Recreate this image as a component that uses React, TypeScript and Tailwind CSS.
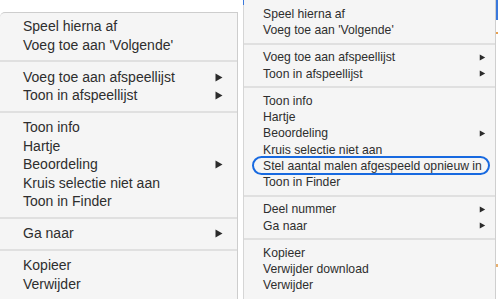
import React from "react";

type Entry = { label?: string; sub?: boolean; sep?: boolean; mark?: boolean };

const leftItems: Entry[] = [
  { label: "Speel hierna af" },
  { label: "Voeg toe aan 'Volgende'" },
  { sep: true },
  { label: "Voeg toe aan afspeellijst", sub: true },
  { label: "Toon in afspeellijst", sub: true },
  { sep: true },
  { label: "Toon info" },
  { label: "Hartje" },
  { label: "Beoordeling", sub: true },
  { label: "Kruis selectie niet aan" },
  { label: "Toon in Finder" },
  { sep: true },
  { label: "Ga naar", sub: true },
  { sep: true },
  { label: "Kopieer" },
  { label: "Verwijder" },
];

const rightItems: Entry[] = [
  { label: "Speel hierna af" },
  { label: "Voeg toe aan 'Volgende'" },
  { sep: true },
  { label: "Voeg toe aan afspeellijst", sub: true },
  { label: "Toon in afspeellijst", sub: true },
  { sep: true },
  { label: "Toon info" },
  { label: "Hartje" },
  { label: "Beoordeling", sub: true },
  { label: "Kruis selectie niet aan" },
  { label: "Stel aantal malen afgespeeld opnieuw in", mark: true },
  { label: "Toon in Finder" },
  { sep: true },
  { label: "Deel nummer", sub: true },
  { label: "Ga naar", sub: true },
  { sep: true },
  { label: "Kopieer" },
  { label: "Verwijder download" },
  { label: "Verwijder" },
];

function Arrow({ w, h }: { w: number; h: number }) {
  return (
    <svg width={w} height={h} viewBox="0 0 8 9" className="shrink-0">
      <path d="M0.5 0.5 L7.5 4.5 L0.5 8.5 Z" fill="#2b2b2b" />
    </svg>
  );
}

export default function App() {
  return (
    <div className="w-[500px] h-[299px] bg-white flex overflow-hidden font-['Liberation_Sans',Arial,sans-serif] text-[#2e2e2e]">
      {/* Old menu */}
      <div className="w-[238px] shrink-0 mt-[12px] bg-[#f5f5f5] border-t border-r border-[#cdcdcd] rounded-tl-[5px] pt-[4.25px] text-[14px]">
        {leftItems.map((item, i) =>
          item.sep ? (
            <div key={i} className="h-[13.5px] flex items-center">
              <div className="h-[2px] w-full bg-[#e0e0e0]" />
            </div>
          ) : (
            <div
              key={i}
              className="h-[18.5px] flex items-center justify-between pl-[23px] pr-[14px] whitespace-nowrap"
            >
              <span>{item.label}</span>
              {item.sub && <Arrow w={8} h={9} />}
            </div>
          )
        )}
      </div>

      <div className="w-[5px] shrink-0" />

      {/* window edge behind the new menu */}
      <div className="w-[1px] shrink-0 bg-[#d6d6d6] flex flex-col">
        <div className="h-[5px] bg-[#3a78dc]" />
      </div>

      {/* New menu */}
      <div className="w-[252px] shrink-0 bg-[#f5f5f5] border-r border-[#cfcfcf] pt-[5.85px] text-[12.2px]">
        {rightItems.map((item, i) =>
          item.sep ? (
            <div key={i} className="h-[10.8px] flex items-center">
              <div className="h-[2px] w-full bg-[#e0e0e0]" />
            </div>
          ) : (
            <div
              key={i}
              className="relative h-[16.3px] flex items-center justify-between pl-[19px] pr-[9px] whitespace-nowrap"
            >
              <span>{item.label}</span>
              {item.sub && <Arrow w={7} h={7} />}
              {item.mark && (
                <span className="absolute left-[7.5px] right-[5px] top-[-2px] bottom-[-1px] rounded-[10px] border-[2.5px] border-[#1769e0]" />
              )}
            </div>
          )
        )}
      </div>

      <div className="w-[4px] shrink-0 flex flex-col">
        <div className="h-[20px] bg-[#3a78dc] w-[2px]" />
        <div className="h-[12px]" />
        <div className="h-[2px] w-[2px] bg-[#e8a050]" />
        <div className="h-[230px]" />
        <div className="h-[3px] w-[2px] bg-[#e8b070]" />
      </div>
    </div>
  );
}
